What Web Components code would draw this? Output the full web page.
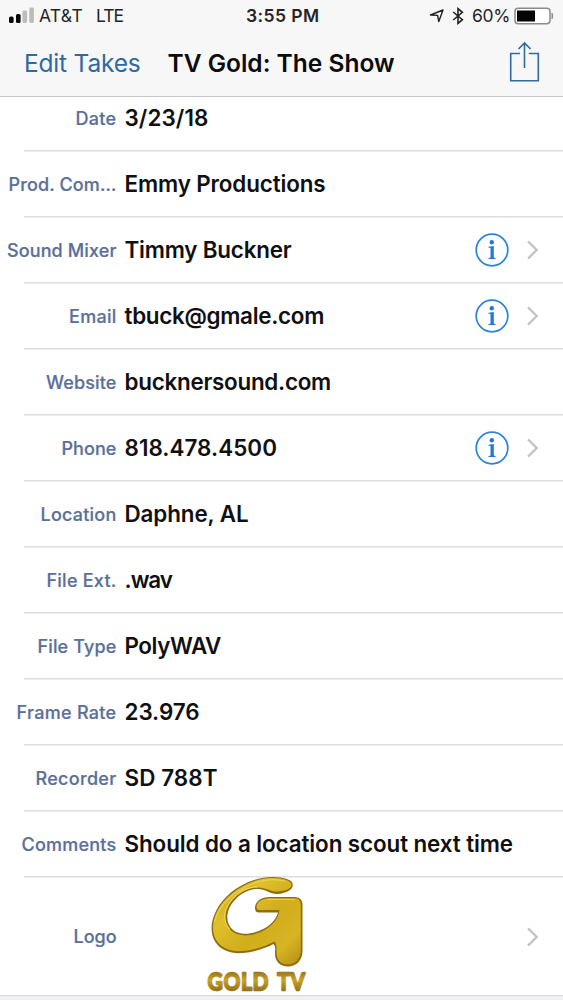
<!DOCTYPE html>
<html lang="en">
<head>
<meta charset="utf-8">
<title>TV Gold: The Show</title>
<style>
html,body{margin:0;height:100%;overflow:hidden;background:#fff}
body{font-family:Inter,"Liberation Sans",sans-serif;color:#111}
</style>
</head>
<body>
<report-screen></report-screen>
<script>
const define = (name, html, setup) => customElements.define(name, class extends HTMLElement {
  connectedCallback() {
    if (this.shadowRoot) return;
    const t = document.createElement('template');
    t.innerHTML = html;
    this.attachShadow({mode: 'open'}).append(t.content.cloneNode(true));
    if (setup) setup(this, this.shadowRoot);
  }
});

// A single line of text tracked to fill the width given in `w`.
define('tracked-text', `<style>:host{display:block;white-space:nowrap;flex:none}span{display:inline-block}</style><span></span>`, (el, root) => {
  const s = root.querySelector('span');
  const text = el.getAttribute('text');
  s.textContent = text;
  const w = +el.getAttribute('w');
  const gap = (w - s.getBoundingClientRect().width) / text.length;
  s.style.letterSpacing = gap.toFixed(3) + 'px';
});

define('signal-bars', `<style>:host{display:block;width:26px;height:17px;flex:none}svg{display:block}</style>
<svg width="26" height="17"><g fill="#080808"><rect x="0" y="9.5" width="4.6" height="6.5" rx="1.6"/><rect x="7" y="7" width="4.6" height="9" rx="1.6"/></g><g fill="#bcbcbd"><rect x="13.5" y="3.5" width="4.6" height="12.5" rx="1.4"/><rect x="20.3" y="0.6" width="4.6" height="15.4" rx="1.4"/></g></svg>`);

define('status-bar', `<style>
:host{display:grid;grid-template-columns:1fr 74px 1fr;height:31px;box-sizing:border-box;align-items:center;font-size:17.5px;color:#252525}
div{display:flex;align-items:center}
.l{padding-left:9px}.l signal-bars{margin-right:4px}.lte{margin-left:13px}
.t{font-weight:600;font-size:17.5px;padding-left:1.5px}
.r{justify-content:flex-end;padding-right:9px}
.r svg{display:block;flex:none}.bt{margin:0 8px 0 7px}.bat{margin-left:4px}
</style>
<div class="l"><signal-bars></signal-bars><tracked-text text="AT&amp;T" w="44"></tracked-text><tracked-text class="lte" text="LTE" w="27"></tracked-text></div>
<div class="t"><tracked-text text="3:55 PM" w="73.5"></tracked-text></div>
<div class="r">
<svg width="16" height="16" viewBox="0 0 16 16"><path d="M1.5 7 14 2 9.8 13.5 8.6 7.4Z" fill="none" stroke="#222" stroke-width="1.4" stroke-linejoin="round"/></svg>
<svg class="bt" width="12" height="18" viewBox="0 0 12 18"><path d="M1.2 5 10.4 12.7 6 16.4V1.6L10.4 5.3 1.2 13" fill="none" stroke="#222" stroke-width="1.6"/></svg>
<tracked-text text="60%" w="38"></tracked-text>
<svg class="bat" width="40" height="18" viewBox="0 0 40 18"><rect x="1" y="1.3" width="35" height="15.4" rx="3.2" fill="#fff" stroke="#8b8b8b" stroke-width="1.5"/><rect x="3" y="3.5" width="18" height="11" fill="#050505"/><path d="M38 6.2v5.6q1.7-2.8 0-5.6Z" fill="#8b8b8b" stroke="#8b8b8b"/></svg>
</div>`);

define('nav-bar', `<style>
:host{display:flex;align-items:center;height:65px;padding:0 23px 0 24px;box-sizing:border-box;font-size:24.5px}
tracked-text{margin-bottom:2px}
.back{color:#2e69a3}.title{font-weight:600;margin-left:27px;color:#0b0b0b}svg{margin-left:auto;margin-top:-4px;display:block}
</style>
<tracked-text class="back" text="Edit Takes" w="116.5"></tracked-text>
<tracked-text class="title" text="TV Gold: The Show" w="227"></tracked-text>
<svg width="31" height="42" viewBox="0 0 31 42"><path d="M11 12.5H1.7V39.8H29.3V12.5H19.8M15.5 27V2.5M9.5 8 15.5 2 21.5 8" fill="none" stroke="#3169a3" stroke-width="1.6"/></svg>`);

define('info-button', `<style>:host{display:block;width:34px;height:34px}svg{display:block}</style>
<svg width="34" height="34" viewBox="0 0 34 34"><g fill="none" stroke="#2c82dc" stroke-width="1.7"><circle cx="17" cy="17" r="15.8"/></g><g fill="#2578d4"><circle cx="16.8" cy="9.2" r="2.2"/><path d="M13.4 13.7 18.8 13V24.6L20.6 25.2V26H13.4V25.2L15.5 24.6V15L13.4 14.6Z"/></g></svg>`);

define('disclosure-chevron', `<style>:host{display:block;width:14px;height:20px}svg{display:block}</style>
<svg width="14" height="20" viewBox="0 0 14 20"><path d="M2 1.4 10.7 10 2 18.6" fill="none" stroke="#c3c3c6" stroke-width="2.3"/></svg>`);

define('gold-logo', `<style>:host{display:block;width:110px;height:117px}svg{display:block;overflow:visible}</style>
<svg width="110" height="117" viewBox="200 878 110 117">
<defs>
<linearGradient id="g" x1="0" y1="0" x2="1" y2="1"><stop offset="0" stop-color="#c39d18"/><stop offset=".3" stop-color="#dfc02a"/><stop offset=".55" stop-color="#d2ad1c"/><stop offset=".8" stop-color="#d6b423"/><stop offset="1" stop-color="#b58e12"/></linearGradient>
<linearGradient id="t" gradientUnits="userSpaceOnUse" x1="0" y1="971" x2="0" y2="991"><stop offset="0" stop-color="#94711a"/><stop offset=".45" stop-color="#c9a424"/><stop offset="1" stop-color="#94711a"/></linearGradient>
</defs>
<path d="M290 890C294 887 294 881.500 288 879.500C278 876 265 876.500 254 880C237 885.500 223 897 216 911C210.500 922 210 933 215 941.500C220.500 950.500 231 954 243 953C254 952 265 948.500 273.500 944C276 947 275 950 275 954C275 961 280 966.500 288 966.500C296.500 966.500 302.500 960 302.500 951V905C302.500 899.500 300 897.500 295 897H270C261 897 255 901.500 255 908Q255 912.500 259 912.500H278C276 920 270 926 261 930C251 934.500 240 935.500 233 930C226 924 225.500 914 231 905C237 895.500 247 889.500 257 889C265 888.500 270 894.500 278 894C283 893.500 287 892 290 890Z" fill="#8f6c12"/>
<path d="M289 888.500C292.500 886 292.500 882.500 287.500 880.500C278 877 265 877.500 254.500 881C238 886.500 224 898 217 911.500C212 922 211.500 932.500 216.500 940.500C221.500 948.500 232 952 243 951C254 950 265 946.500 274.500 941.500C277 944 276.500 948 276.500 952C276.500 960 281 964.500 288 964.500C295.500 964.500 300.800 958.500 300.800 950V905.500C300.800 900.500 299 898.500 295 898.200H270C262 898.200 256.500 902 256.500 907Q256.500 910 259.500 910H279.500C278.500 919 272 926.500 262 931.500C251 936.500 239 937 231.500 931C224 924.500 223.500 913.500 229.500 904C235.500 894.500 247 888 257.500 887.500C265 887 270 891.800 278 891.500C282.500 891 286.500 890.500 289 888.500Z" fill="url(#g)"/>
<path d="M285 881.200C276 878.500 264 879.500 253 883.500C234 890.500 218 906 214.500 922M230 929.500C222.500 922 223.500 911.500 229.500 902.500C237.500 891 248 886.800 257.500 886.800M267 899.500H295" fill="none" stroke="#eedb68" stroke-width="1.2" opacity=".7"/>
<text x="207.800" y="989.500" textLength="98" lengthAdjust="spacingAndGlyphs" letter-spacing="1.200" word-spacing="3" font-family="Lato,sans-serif" font-size="23.500" stroke-width="2.500" stroke-linejoin="round" fill="url(#t)" stroke="url(#t)">GOLD TV</text>
</svg>`);

define('field-row', `<style>
:host{display:flex;flex-direction:column;height:66px;box-sizing:border-box}
:host([first]){height:55px}:host([logo]){height:117px}
.body{flex:1;display:flex;align-items:center;min-height:0}
:host([first]) .body{padding-bottom:11px}
.label{width:116.500px;display:flex;justify-content:flex-end;flex:none;font-weight:500;font-size:18px;color:#5a7099;-webkit-text-stroke:.2px #5a7099}
.value{margin-left:8px;flex:1;font-weight:600;font-size:22.4px;color:#101012}
.value tracked-text{margin-bottom:2px}
.tools{display:flex;align-items:center;margin-right:23px;gap:17px}
.line{height:2px;margin-left:24px;background:linear-gradient(#dfdfe1 55%,#eeeeef 55%);flex:none}
:host([logo]) .line{display:none}
::slotted(gold-logo){margin-left:75px}
</style><div class="body"><div class="label"></div><div class="value"><slot></slot></div><div class="tools"></div></div><div class="line"></div>`, (el, root) => {
  const put = (sel, text, w) => {
    const n = document.createElement('tracked-text');
    n.setAttribute('text', text); n.setAttribute('w', w);
    root.querySelector(sel).append(n);
  };
  put('.label', el.getAttribute('label'), el.getAttribute('lw'));
  if (el.hasAttribute('value')) put('.value', el.getAttribute('value'), el.getAttribute('vw'));
  const tools = root.querySelector('.tools');
  if (el.hasAttribute('info')) tools.append(document.createElement('info-button'));
  if (el.hasAttribute('more')) tools.append(document.createElement('disclosure-chevron'));
});

define('report-screen', `<style>
:host{display:flex;flex-direction:column;width:563px;height:1000px;background:#fff}
header{background:#f7f7f8;height:97px;box-sizing:border-box;border-bottom:1px solid #c6c6c8;flex:none}
footer{flex:1;background:#f0f0f2;border-top:1px solid #d6d6d8}
</style>
<header><status-bar></status-bar><nav-bar></nav-bar></header>
<main>
<field-row first label="Date" lw="41" value="3/23/18" vw="84"></field-row>
<field-row label="Prod. Com…" lw="108" value="Emmy Productions" vw="201"></field-row>
<field-row label="Sound Mixer" lw="109.5" value="Timmy Buckner" vw="167" info more></field-row>
<field-row label="Email" lw="47.5" value="tbuck@gmale.com" vw="199.5" info more></field-row>
<field-row label="Website" lw="70.5" value="bucknersound.com" vw="206.5"></field-row>
<field-row label="Phone" lw="55" value="818.478.4500" vw="152.5" info more></field-row>
<field-row label="Location" lw="76" value="Daphne, AL" vw="124"></field-row>
<field-row label="File Ext." lw="70" value=".wav" vw="47.5"></field-row>
<field-row label="File Type" lw="79" value="PolyWAV" vw="96.5"></field-row>
<field-row label="Frame Rate" lw="100" value="23.976" vw="75"></field-row>
<field-row label="Recorder" lw="81" value="SD 788T" vw="93"></field-row>
<field-row label="Comments" lw="95" value="Should do a location scout next time" vw="388.5"></field-row>
<field-row logo label="Logo" lw="43" more><gold-logo></gold-logo></field-row>
</main>
<footer></footer>`);
</script>
</body>
</html>
